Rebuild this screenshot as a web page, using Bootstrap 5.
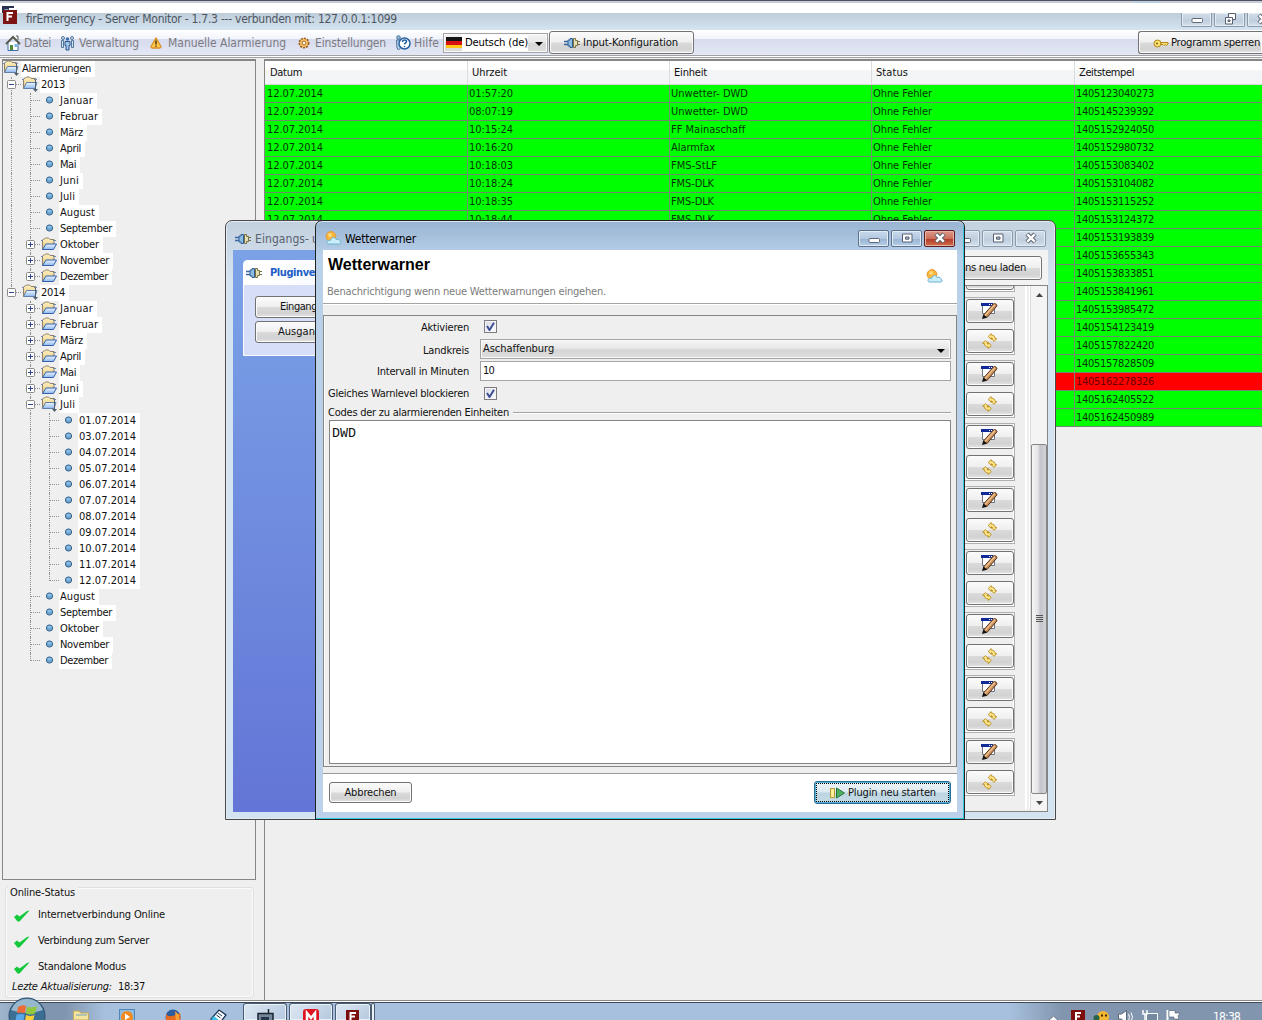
<!DOCTYPE html>
<html lang="de">
<head>
<meta charset="utf-8">
<title>firEmergency - Server Monitor</title>
<link rel="stylesheet" href="https://cdn.jsdelivr.net/npm/bootstrap@5.3.0/dist/css/bootstrap.min.css">
<script src="https://cdn.jsdelivr.net/npm/bootstrap@5.3.0/dist/js/bootstrap.bundle.min.js"></script>
<style>
html,body{height:1020px;overflow:hidden}
body{width:1262px;position:relative;background:#efefef;color:#111;font:11px/16px "DejaVu Sans Condensed","DejaVu Sans",sans-serif}
svg{display:block;flex:none}
[data-w],.fx{white-space:pre;flex:none}
.screen{height:1020px}
.topstrip{height:13px;background:#fff;border-top:1px solid #4c5262;box-shadow:inset 0 2px #c6ccd6}
.titlebar{height:17px;background:linear-gradient(#bfcdda,#d5e4f1);color:#4d5660;font-size:12px;padding-left:3px}
.appmenu{height:25px;background:linear-gradient(#fff 0,#f2f4fb 35%,#d6dbee 36%,#e4e8f6 100%);color:#7c7c80;font-size:12px;padding-left:2px}
.rule{height:3px;flex:none;border-top:1px solid #a2a2a2;background:linear-gradient(#fff 0 1px,#a2a2a2 1px 2px)}
.jb{border:1px solid #727272;border-radius:3px;background:linear-gradient(#fbfbfb 0,#efefef 48%,#dadada 52%,#d2d2d2 80%,#e4e4e4 100%);color:#111;box-shadow:inset 0 0 0 1px #fbfbfb}
.wb{width:31px;height:17px;border:1px solid #8b98aa;border-radius:2px;background:linear-gradient(#d2dde9,#c3d0df 50%,#bccbdb 51%,#d3e0ec);box-shadow:inset 0 0 0 1px #e3ebf3}
.wb.cut{height:14px;border-top:0;flex:none;border-radius:0 0 2px 2px}
.wb.act{border-color:#5c718d;background:linear-gradient(#c9d9ec,#b3c8e0 50%,#98b3d2 51%,#b5cfe9)}
.wb.shut{border-color:#5b1d1c;background:linear-gradient(#dc9a88,#cb6e5c 50%,#b43a26 51%,#cf6c4c);box-shadow:inset 0 0 0 1px #e7b3a6}
.treebox{width:254px;height:821px;margin-left:2px;border:1px solid #868686;border-top-width:2px;background:#efefef}
.trow{height:16px}
.cell{width:19px;height:16px;position:relative;flex:none}
.cell.v::before{content:"";position:absolute;left:8px;top:0;bottom:0;border-left:1px dotted #909090}
.cell.half::before{bottom:8px}
.cell.h::after{content:"";position:absolute;left:9px;right:1px;top:7px;border-top:1px dotted #909090}
.cell svg{position:absolute;left:4px;top:3px;z-index:1}
.tlabel{background:#fff;height:16px;padding:0 4px 0 1px;line-height:15px}
.ticon{width:18px;height:16px;flex:none;margin-top:-1px}
.statusbox{margin:7px 3px 0 5px;height:111px;width:249px;border:1px solid #dce1e6;border-radius:3px;box-shadow:inset 0 0 0 1px #fafafa}
.statusbox .cap{background:#efefef;margin:-3px 0 0 2px;padding:0 2px;line-height:16px;width:70px}
.onl{padding:6px 0 0 8px;height:26px}
.onl svg{margin-top:3px}
.leftcol{width:257px}
.gridbox{margin-left:7px;border:1px solid #868686;border-right:0;border-top-width:2px;height:942px}
.ghead{height:24px;background:linear-gradient(#fff 0,#fff 38%,#f4f5f6 42%,#f3f4f5);border-bottom:1px solid #d8d8d8}
.ghead>div{border-right:1px solid #dcdcdc;padding:4px 0 0 5px;height:100%}
.ghead>div+div{padding-left:4px}
.grow{height:18px;background:#0f0;color:#063306;border-bottom:1px solid #708870}
.grow.bad{background:#f00;color:#600}
.grow>div{border-right:1px solid #709070;padding-left:1px;line-height:17px}
.grow>div:first-child{padding-left:2px}
.c1{width:203px}.c2{width:202px}.c5{width:190px}
.taskbar{position:absolute;left:0;right:0;top:1000px;height:20px;border-top:1px solid #8a8a8a;background:#a7c0dd}
.taskbar .shade{position:absolute;inset:0;border-top:1px solid #fff;background:linear-gradient(#3d4858 0 1px,transparent 1px),linear-gradient(90deg,#9fb4cd 0,#8095af 40px,#8095af 65px,#a7c0dd 105px,#a7c0dd 1010px,#8195ae 1062px,#8195ae)}
.tb{height:17px;border:1px solid #4b5c72;border-bottom:0;border-radius:3px 3px 0 0;background:linear-gradient(135deg,#dde7f2,#b5c9e0);box-shadow:inset 0 0 0 1px #e9f1f8}
.pin{position:absolute}
.win{position:absolute;top:220px;height:600px;border:1px solid #222;border-radius:7px 7px 0 0}
.win .wt{height:29px;font-size:12px}
#back{left:225px;width:831px;background:linear-gradient(#c3d0de,#d6e4f1 60px,#d4e3f1);border-color:#4a4a4a;padding:0 7px 7px;box-shadow:inset 0 0 0 1px #e3ecf4}
#front{left:315px;width:650px;background:linear-gradient(#98b4d2,#b9d0e9 35px,#bcd2ea);padding:0 7px 7px;box-shadow:inset 0 1px #dbe7f3,inset -1px -1px #35c8dc}
.bluepane{width:600px;background:linear-gradient(#7ba2e7,#6375d6);padding:10px}
.plug{border:1px solid #fff;background:#d6dff7;height:96px;width:400px;border-radius:4px 4px 0 0}
.plug .ph{height:24px;background:linear-gradient(90deg,#fff,#fff 20px,#d5defa);color:#215dc6;font-weight:bold;border-radius:4px 4px 0 0}
.backtool{height:35px;background:#f3f3f3}
.grp{width:61px;height:58px;margin-bottom:5px;border:1px solid #b0b0b0;box-shadow:inset -1px -1px #fff;padding:1px 0 0 11px}
.grp .jb{width:48px;height:24px}
.grp .jb+.jb{margin-top:6px}
.listpane{height:527px;border:1px solid #858585;border-left:0;background:#efefef;overflow:hidden}
.scrollcol{width:17px;background:#f4f4f4;border-left:1px solid #ddd}
.thumb{width:16px;height:350px;border:1px solid #858585;border-radius:2px;background:linear-gradient(90deg,#f6f6f6,#e5e5e7 40%,#c5c6cb 60%,#d2d3d7)}
.fhead{height:53px;background:#fff}
.fhead h1{font:bold 16px/19px "Liberation Sans",Arial,sans-serif;margin:0;padding:5px 0 0 5px;color:#000}
.formpane{margin-top:11px;height:452px;border:1px solid #858585;border-left-color:#888;padding-left:5px;box-shadow:inset 1px 0 #fff}
.flabel{width:140px;text-align:right;flex:none;display:flex;justify-content:flex-end;padding-top:2px}
.chk{width:13px;height:13px;border:1px solid #7c7c82;background:linear-gradient(135deg,#d5d9e4,#fff);box-shadow:inset 0 0 0 1px #f5f5f5}
.fld{width:471px;height:20px;border:1px solid #a4a4a4;background:#fff;padding-left:2px}
.sel{background:linear-gradient(#f4f4f4 0,#e8e8e8 45%,#d6d6d6 55%,#dedede);box-shadow:inset 0 0 0 1px #fafafa}
.area{width:622px;height:344px;border:1px solid #848484;background:#fff;padding:6px 2px;font:13.3px/14px "Liberation Mono",monospace}
.ffoot{margin-top:6px;border-top:1px solid #9a9a9a;height:39px;background:#fff;padding:0 6px 1px}
.primary{border-color:#2b6f94;background:linear-gradient(#eef5f8,#dbe9f0 48%,#bcd5e2 52%,#c6dce7);box-shadow:inset 0 0 0 1px #55aed6}
.primary span.dots{border:1px dotted #000;margin:1px}
</style>
</head>
<body>
<svg width="0" height="0" class="pin">
<defs>
<linearGradient id="gy" x2="0" y2="1"><stop stop-color="#fff3c0"/><stop offset="1" stop-color="#e6c277"/></linearGradient>
<linearGradient id="gb" x2="0" y2="1"><stop stop-color="#eef6ff"/><stop offset="1" stop-color="#8db8ee"/></linearGradient>
<symbol id="folder" viewBox="0 0 17 16"><path d="M1.500 13.500V4.500l1-1.500h1l1-1h3l1.500 1.500h4v5" fill="url(#gy)" stroke="#8b7f6a"/><path d="M1.500 13.500l3.500-5.500h10.500l-3 5.500z" fill="url(#gb)" stroke="#3560b0"/><path d="M0 4.500h2M12 4.500h3" stroke="#7689a8"/></symbol>
<symbol id="fopen" viewBox="0 0 17 16"><path d="M1.500 12.500V3.500l1-1.500h1l1-1h3l1.500 1.500h4.500v5" fill="url(#gy)" stroke="#8b7f6a"/><path d="M1.500 12.500l3-6h10.500l-2 6z" fill="url(#gb)" stroke="#6380a8"/><path d="M0 3.500h2M12 3.500h3" stroke="#7689a8"/><path d="M13.500 4v10" stroke="#50606e"/><path d="M11 13h5l-2.500 3z" fill="#50606e"/></symbol>
<symbol id="dot" viewBox="0 0 16 16"><circle cx="8.500" cy="8" r="3.100" fill="#6fa8d6" stroke="#33618b"/><path d="M6.500 7h4" stroke="#aed4ef"/></symbol>
<symbol id="plug" viewBox="0 0 17 12"><path d="M0 4.500h5M0 7.500h5" stroke="#3c6aa0" stroke-width="1.500"/><path d="M4 3h2V1.500h2.500v9H6V9H4z" fill="#8cbbe2" stroke="#315f96"/><path d="M9.500 1.500h2v2h2v5h-2v2h-2z" fill="#e5dfb4" stroke="#777044"/><path d="M13 4.500h3M13 7.500h3" stroke="#777044" stroke-width="1.200"/></symbol>
<symbol id="sun" viewBox="0 0 17 14"><circle cx="6" cy="5.500" r="4.900" fill="#f9b53c" stroke="#e69834"/><circle cx="5" cy="4" r="2" fill="#ffd978"/><path d="M3 13c-2.500-1.500 0-4.500 2.500-3.500C6 6 10.500 5.500 11 8.500c2.500-1 4.500.5 4 2 1.800.5 1.500 2.500-.5 2.500z" fill="#c9edf9" stroke="#6fb4d2"/></symbol>
<symbol id="pen" viewBox="0 0 18 16"><path d="M1.500 1.500h12v9h-12z" fill="#fff" stroke="#6b7480"/><path d="M0 0h12v3H0z" fill="#102b99"/><path d="M8 1.500h4" stroke="#fff" stroke-dasharray="1 1"/><path d="M2.500 12L12.500.8q3-.8 3.500 2L6 14.500z" fill="#c88d56" stroke="#5a351d"/><path d="M4 12.500L14 1.500" stroke="#efc494" stroke-width="1.200"/><path d="M1 16l1.300-4.500L6 14.700z" fill="#111"/></symbol>
<symbol id="swap" viewBox="0 0 16 16"><path d="M6.200 3.500L9.200.6V2c2.600 0 4 1.600 4 3.700h1.600l-2.800 2.600L9.300 5.700h1.200q-.2-.9-1.300-.9v1.600z" fill="#ffe68a" stroke="#b98a1c" stroke-width=".9"/><path d="M9.300 12.500l-3 2.900V14c-2.600 0-4-1.600-4-3.700H.7l2.800-2.600 2.700 2.600H5q.2.900 1.300.9V9.600z" fill="#ffe68a" stroke="#b98a1c" stroke-width=".9"/></symbol>
<symbol id="tick" viewBox="0 0 16 12"><path d="M0 7l3-2.500 2.500 2L13 1l2.500-.5L5.500 11.500H3.500z" fill="#12c83b"/></symbol>
<symbol id="cmark" viewBox="0 0 9 9"><path d="M1 4l2.500 4L8 .8" fill="none" stroke="#3e4e96" stroke-width="2"/></symbol>
<symbol id="wmin" viewBox="0 0 14 12"><rect x="2" y="6.500" width="10.500" height="4" rx="1" fill="#fff" stroke="#5d6776"/></symbol>
<symbol id="wmax" viewBox="0 0 14 12"><path d="M2.500 2h9.500v8H2.500z" fill="#fff" stroke="#566070"/><path d="M5.500 5h3.500v2.200H5.500z" fill="#aebccd" stroke="#566070"/></symbol>
<symbol id="wres" viewBox="0 0 14 12"><path d="M5.500.5h7v6h-7z" fill="#fff" stroke="#566070"/><path d="M2.500 4.500h7v6.500h-7z" fill="#fff" stroke="#566070"/><path d="M5 7h2v1.500H5z" fill="#bbb" stroke="#566070"/></symbol>
<symbol id="wx" viewBox="0 0 14 12"><path d="M3 2l8 8M11 2l-8 8" stroke="#555f6e" stroke-width="4.400"/><path d="M3.300 2.300l7.400 7.400M10.700 2.300L3.300 9.700" stroke="#fff" stroke-width="2.400"/></symbol>
<symbol id="plus" viewBox="0 0 9 9"><rect x=".5" y=".5" width="8" height="8" rx="1" fill="#fff" stroke="#8a8a8a"/><path d="M2 4.500h5M4.500 2v5" stroke="#2c468c"/></symbol>
<symbol id="minus" viewBox="0 0 9 9"><rect x=".5" y=".5" width="8" height="8" rx="1" fill="#fff" stroke="#8a8a8a"/><path d="M2 4.500h5" stroke="#2c468c"/></symbol>
</defs>
</svg>

<div class="screen d-flex flex-column">
  <div class="topstrip d-flex justify-content-between"><svg width="16" height="12"><path d="M2 5h12v2h-5v5H2z" fill="#26324e"/><path d="M4.500 8h4v3h-4z" fill="#8ba0ce"/></svg><svg width="130" height="2"><path d="M1 0h27v2H1z" fill="#b9cde3"/></svg></div>
  <div class="titlebar d-flex">
    <svg width="14" height="14" style="margin-top:-3px"><rect width="14" height="14" fill="#7c1414"/><path d="M4.500 2v9M5 3h5M5 6.500h4" stroke="#fff" stroke-width="2"/></svg>
    <span class="fx" data-w="371" style="margin:-2px 0 0 9px">firEmergency - Server Monitor - 1.7.3 --- verbunden mit: 127.0.0.1:1099</span>
    <div class="d-flex ms-auto overflow-hidden" style="width:81px;gap:2px">
      <div class="wb cut d-flex justify-content-center"><svg width="14" height="12" style="margin-top:-1px"><use href="#wmin"/></svg></div>
      <div class="wb cut d-flex justify-content-center"><svg width="14" height="12"><use href="#wres"/></svg></div>
      <div class="wb cut ps-2"><svg width="14" height="12"><use href="#wx"/></svg></div>
    </div>
  </div>
  <div class="appmenu d-flex align-items-center">
    <svg width="18" height="18" viewBox="0 0 18 18" style="margin-left:2px"><path d="M4 8v8.500h10V8" fill="#fff" stroke="#3d6e9c"/><path d="M2 10l7-7 7 7" fill="none" stroke="#5a5c50" stroke-width="2"/><path d="M12 2h2v4" stroke="#5a5c50" fill="none"/><rect x="6" y="11" width="3" height="5" fill="#4f8b34"/><rect x="10.500" y="10" width="2.500" height="3" fill="#78b9e8"/></svg>
    <span data-w="27" style="margin-left:2px">Datei</span>
    <svg width="15" height="16" viewBox="0 0 15 16" style="margin-left:9px"><g fill="#cfe2f3" stroke="#51779b"><circle cx="3" cy="3" r="1.500"/><path d="M1.500 5.500h2v7h-2z"/><circle cx="12" cy="3" r="1.500"/><path d="M11.500 5.500h2v7h-2z"/></g><circle cx="7.500" cy="4" r="1.800" fill="#3b6fb4"/><path d="M5 6.500h5v4H9V15H6v-4.500H5z" fill="#a2c7ec" stroke="#2c538a"/></svg>
    <span data-w="60" style="margin-left:4px">Verwaltung</span>
    <svg width="12" height="12" viewBox="0 0 12 12" style="margin-left:11px"><path d="M6 1L11 9.500q0 1.500-1.500 1.500h-7Q1 11 1 9.500z" fill="#ffc84a" stroke="#d99026" stroke-width="1.300"/><path d="M6 3.500v4M6 8.500v1.300" stroke="#4a3208" stroke-width="1.500"/></svg>
    <span data-w="118" style="margin-left:6px">Manuelle Alarmierung</span>
    <svg width="12" height="12" viewBox="0 0 12 12" style="margin-left:12px"><circle cx="6" cy="6" r="4.600" fill="#f2b65c" stroke="#9a5c20" stroke-width="1.800" stroke-dasharray="2 1"/><circle cx="6" cy="6" r="3.800" fill="#f4bd68"/><circle cx="6" cy="6" r="1.800" fill="#fff" stroke="#b5752c"/></svg>
    <span data-w="71" style="margin-left:5px">Einstellungen</span>
    <svg width="16" height="16" viewBox="0 0 16 16" style="margin-left:9px"><circle cx="3.500" cy="2.500" r="1.800" fill="#8db6dd" stroke="#4a7197"/><path d="M1.500 5h4v8l-2 2-1.500-2z" fill="#bad4ec" stroke="#4a7197"/><circle cx="9.500" cy="8.500" r="5.500" fill="#fff" stroke="#24619d" stroke-width="1.500"/><path d="M7.500 7q0-2 2-2t2 1.500q0 1-1 1.500t-1 1.500M9.500 11v1.300" fill="none" stroke="#24619d" stroke-width="1.500"/></svg>
    <span data-w="25" style="margin-left:3px">Hilfe</span>
    <div class="d-flex align-items-center sel fld text-black" style="width:105px;margin-left:4px">
      <svg width="16" height="11"><rect width="16" height="11" fill="#ffc717"/><rect width="16" height="8" fill="#d81010"/><rect width="16" height="4" fill="#151515"/></svg>
      <span class="bg-white" data-w="63" style="padding-left:3px;font-size:11.200px">Deutsch (de)</span>
      <svg width="8" height="4" style="margin:3px 0 0 7px"><path d="M0 0h8L4 4z"/></svg>
    </div>
    <div class="jb d-flex align-items-center" style="width:145px;height:23px;margin-left:1px;padding-left:14px;font-size:11.200px">
      <svg width="17" height="12"><use href="#plug"/></svg><span data-w="95" style="margin-left:2px">Input-Konfiguration</span>
    </div>
    <div class="jb d-flex align-items-center ms-auto" style="width:124px;height:23px;padding-left:14px;border-right:0;border-radius:3px 0 0 3px;font-size:11.200px">
      <svg width="16" height="12" viewBox="0 0 16 12"><circle cx="4.500" cy="6.500" r="3.500" fill="#ffe270" stroke="#b2861c"/><circle cx="4" cy="6.500" r="1" fill="#7a5a10"/><path d="M8 5.500h7v1.500l-1.500 1.500-1-1-1.500 1-1-1H8z" fill="#ffe270" stroke="#b2861c"/></svg>
      <span data-w="89" style="margin-left:2px">Programm sperren</span>
    </div>
  </div>
  <div class="rule"></div>
  <div class="d-flex" style="padding-top:1px">
    <div class="leftcol flex-shrink-0">
      <div class="treebox"><div class="d-flex flex-column" id="tree"></div></div>
      <div class="statusbox">
        <div class="cap"><span data-w="65">Online-Status</span></div>
        <div class="d-flex onl"><svg width="16" height="12"><use href="#tick"/></svg><span data-w="127" style="margin-left:8px">Internetverbindung Online</span></div>
        <div class="d-flex onl"><svg width="16" height="12"><use href="#tick"/></svg><span data-w="111" style="margin-left:8px">Verbindung zum Server</span></div>
        <div class="d-flex onl"><svg width="16" height="12"><use href="#tick"/></svg><span data-w="88" style="margin-left:8px">Standalone Modus</span></div>
        <div class="d-flex" style="padding-left:6px"><i data-w="100">Lezte Aktualisierung:</i><span data-w="27" style="margin-left:6px">18:37</span></div>
      </div>
    </div>
    <div class="gridbox flex-fill" id="grid">
      <div class="ghead d-flex">
        <div class="c1"><span data-w="32">Datum</span></div><div class="c2"><span data-w="35">Uhrzeit</span></div><div class="c2"><span data-w="33">Einheit</span></div><div class="c1"><span data-w="32">Status</span></div><div class="c5"><span data-w="55">Zeitstempel</span></div>
      </div>
    </div>
  </div>
</div>

<div class="taskbar"><div class="shade"></div>
  <svg class="pin" style="left:8px;top:-4px" width="38" height="24" viewBox="0 0 38 24"><circle cx="19" cy="19" r="18" fill="#3d6f95" stroke="#2a4d6c"/><path d="M3 13a17 17 0 0 1 32 0q-16 6-32 0z" fill="#b5cfdf" opacity=".75"/><path d="M10 10q4-3 8-1l-1 7q-5-1-8 0z" fill="#ec6a35"/><path d="M19 9.500q5 2 10-.5l-2 7.500q-5 2-9 0z" fill="#93c83e"/><path d="M8.500 17.500q4-1 8 0l-1 6h-8z" fill="#59a8e8"/><path d="M18 18q4 2 8.500 0L25 24h-8z" fill="#fbcf35"/></svg>
  <svg class="pin" style="left:73px;top:9px" width="16" height="10"><path d="M.5 1h6l1 2h8v7h-15z" fill="#f3e4a0" stroke="#c4a95a"/><path d="M3 5h11" stroke="#6fa3c8"/></svg>
  <svg class="pin" style="left:119px;top:8px" width="16" height="11"><rect width="15" height="14" x=".5" y=".5" fill="#8dbbe2" stroke="#4d86b8"/><circle cx="8" cy="8" r="6" fill="#f38b20"/><path d="M6 4.500l5 3.500-5 3z" fill="#fff"/></svg>
  <svg class="pin" style="left:165px;top:8px" width="16" height="11"><circle cx="8" cy="8" r="7.500" fill="#2d5d9f"/><path d="M1 4q1 4 6 3t8-3q1 4 0 9H1z" fill="#e66b1f"/><path d="M10 2l4 4v6h-3z" fill="#f5a13a"/></svg>
  <svg class="pin" style="left:210px;top:8px" width="17" height="12"><path d="M1 10l8-9 7 5-7 9z" fill="#fff" stroke="#17324f" stroke-width="1.300"/><path d="M1 10l3-3 7 6-2 2z" fill="#3dc0e8"/><path d="M8 4l4 3M6.500 6l4 3" stroke="#17324f"/></svg>
  <div class="tb pin" style="left:243px;top:2px;width:44px"></div><div class="tb pin" style="left:289px;top:2px;width:44px"></div><div class="tb pin" style="left:335px;top:2px;width:36px"></div><div class="tb pin" style="left:371px;top:2px;width:4px"></div>
  <svg class="pin" style="left:257px;top:8px" width="17" height="11"><path d="M11.500 0v5M1 4.500h15V13H1z" fill="#72869c" stroke="#1c252f" stroke-width="1.500"/><path d="M4 8h8v4H4z" fill="#253548"/></svg>
  <svg class="pin" style="left:303px;top:8px" width="16" height="11"><rect width="16" height="15" rx="3" fill="#e01420"/><path d="M4 12V4l4 5 4-5v8" fill="none" stroke="#fff" stroke-width="2.500"/></svg>
  <svg class="pin" style="left:346px;top:9px" width="13" height="10"><rect width="13" height="13" fill="#7c0e0e"/><path d="M4.500 2v9M5 3h5M5 6.500h4" stroke="#fff" stroke-width="2"/></svg>
  <svg class="pin" style="left:1048px;top:14px" width="11" height="5"><path d="M0 6l5.500-5L11 6z" fill="#fff" stroke="#5f6c7c"/></svg>
  <svg class="pin" style="left:1071px;top:9px" width="14" height="10"><rect width="14" height="13" fill="#7c0e0e"/><path d="M5 2v9M5 3h5M5 6.500h4" stroke="#fff" stroke-width="2"/></svg>
  <svg class="pin" style="left:1093px;top:10px" width="17" height="9"><circle cx="10" cy="6" r="6" fill="#f4b72f"/><circle cx="3.500" cy="7" r="3" fill="#2a6448"/><path d="M8 4.500h2M12 4.500h2" stroke="#402a08" stroke-width="2"/></svg>
  <svg class="pin" style="left:1118px;top:9px" width="17" height="10"><path d="M.5 4h3l5-3.500V14L3.500 9h-3z" fill="#fff" stroke="#5b6877"/><path d="M10.500 4q2 3 0 7M13 2.500q3 5 0 9" fill="none" stroke="#fff"/></svg>
  <svg class="pin" style="left:1142px;top:9px" width="16" height="10"><path d="M4.500 3.500h11V11h-11z" fill="#74899f" stroke="#fff"/><path d="M1 0v4h4V0M3 4v7" fill="none" stroke="#fff" stroke-width="1.500"/></svg>
  <svg class="pin" style="left:1166px;top:8px" width="16" height="11"><path d="M1.500 1v11" stroke="#fff" stroke-width="2"/><path d="M3 1.500h6v2.500h5l-2 3 1 3H8V8H3z" fill="#fff" stroke="#4f5d6e" stroke-width=".6"/></svg>
  <span class="pin text-white" data-w="27" style="left:1213px;top:9px;font-size:12px;line-height:14px">18:38</span>
</div>

<div class="win d-flex flex-column" id="back">
  <div class="wt d-flex" style="color:#58616c">
    <svg width="17" height="12" style="margin:12px 0 0 2px"><use href="#plug"/></svg>
    <span data-w="54" style="margin:10px 0 0 3px">Eingangs-</span><span style="margin:10px 0 0 3px">u</span>
    <div class="d-flex ms-auto" style="margin:9px 2px 0 0;gap:2px">
      <div class="wb d-flex justify-content-center"><svg width="14" height="12" style="margin-top:1px"><use href="#wmin"/></svg></div><div class="wb d-flex justify-content-center"><svg width="14" height="12" style="margin-top:1px"><use href="#wmax"/></svg></div><div class="wb d-flex justify-content-center"><svg width="14" height="12" style="margin-top:1px"><use href="#wx"/></svg></div>
    </div>
  </div>
  <div class="d-flex flex-fill">
    <div class="bluepane">
      <div class="plug">
        <div class="ph d-flex align-items-center"><svg width="17" height="12" style="margin-left:2px"><use href="#plug"/></svg><span data-w="45" style="margin-left:7px">Pluginve</span></div>
        <div class="jb" style="width:130px;height:22px;margin:11px 0 0 11px;padding:2px 0 0 24px"><span data-w="37">Eingang</span></div>
        <div class="jb" style="width:130px;height:22px;margin:3px 0 0 11px;padding:2px 0 0 22px"><span data-w="37">Ausgan</span></div>
      </div>
    </div>
    <div class="flex-fill" style="background:#efefef">
      <div class="backtool d-flex justify-content-end" style="padding:6px 6px 0 0"><div class="jb d-flex align-items-center justify-content-end" style="width:150px;height:24px;padding-right:15px;font-size:11.200px"><span data-w="61">ns neu laden</span></div></div>
      <div class="listpane d-flex justify-content-end">
        <div id="groups" style="margin:-52px 10px 0 0"></div>
        <div style="width:5px;border-left:2px solid #fff;border-right:1px solid #fff;height:523px"></div>
        <div class="scrollcol d-flex flex-column align-items-center">
          <svg width="7" height="4" style="margin-top:7px"><path d="M0 4h7L3.500 0z" fill="#444"/></svg>
          <div class="thumb d-flex align-items-center justify-content-center" style="margin-top:147px"><svg width="7" height="9"><path d="M0 .5h7M0 2.500h7M0 4.500h7M0 6.500h7" stroke="#555"/></svg></div>
          <svg width="7" height="4" style="margin-top:7px"><path d="M0 0h7L3.500 4z" fill="#444"/></svg>
        </div>
      </div>
    </div>
  </div>
</div>

<div class="win" id="front">
  <div class="wt d-flex text-black">
    <svg width="17" height="14" style="margin:10px 0 0 2px"><use href="#sun"/></svg>
    <span data-w="71" style="margin:10px 0 0 3px">Wetterwarner</span>
    <div class="d-flex ms-auto" style="margin:9px 2px 0 0;gap:2px">
      <div class="wb act d-flex justify-content-center"><svg width="14" height="12" style="margin-top:1px"><use href="#wmin"/></svg></div><div class="wb act d-flex justify-content-center"><svg width="14" height="12" style="margin-top:1px"><use href="#wmax"/></svg></div><div class="wb shut d-flex justify-content-center"><svg width="14" height="12" style="margin-top:1px"><use href="#wx"/></svg></div>
    </div>
  </div>
  <div style="background:#efefef;height:562px">
    <div class="fhead d-flex justify-content-between">
      <div><h1><span data-w="102">Wetterwarner</span></h1><div style="color:#7b7b7b;padding:10px 0 0 4px"><span data-w="279">Benachrichtigung wenn neue Wetterwarnungen eingehen.</span></div></div>
      <svg width="17" height="14" style="margin:19px 14px 0 0"><use href="#sun"/></svg>
    </div>
    <div style="height:2px;border-top:1px solid #a4a4a4;background:#fff;margin-bottom:-1px"></div>
    <div class="formpane">
      <div class="d-flex align-items-center" style="height:22px"><div class="flabel"><span data-w="48">Aktivieren</span></div><div class="chk" style="margin-left:15px;margin-top:-1px"><svg width="9" height="9" style="margin:1px"><use href="#cmark"/></svg></div></div>
      <div class="d-flex align-items-center" style="height:22px;padding-top:2px"><div class="flabel"><span data-w="46">Landkreis</span></div><div class="fld sel d-flex align-items-center" style="margin-left:11px;margin-top:-2px"><span data-w="71">Aschaffenburg</span><svg width="8" height="4" class="ms-auto" style="margin:3px 5px 0 0"><path d="M0 0h8L4 4z"/></svg></div></div>
      <div class="d-flex align-items-center" style="height:22px"><div class="flabel"><span data-w="92">Intervall in Minuten</span></div><div class="fld d-flex align-items-center" style="margin-left:11px"><span data-w="11">10</span></div></div>
      <div class="d-flex align-items-center" style="height:22px"><div class="flabel"><span data-w="141">Gleiches Warnlevel blockieren</span></div><div class="chk" style="margin-left:15px"><svg width="9" height="9" style="margin:1px"><use href="#cmark"/></svg></div></div>
      <div class="d-flex align-items-center" style="height:16px;margin-left:-1px;padding-top:2px"><span data-w="181">Codes der zu alarmierenden Einheiten</span><div style="width:438px;margin-left:4px;border-top:1px solid #a2a2a2;border-bottom:1px solid #fff"></div></div>
      <div class="area">DWD</div>
    </div>
    <div class="ffoot d-flex align-items-center justify-content-between">
      <div class="jb d-flex align-items-center justify-content-center" style="width:83px;height:21px"><span data-w="52">Abbrechen</span></div>
      <div class="jb primary d-flex" style="width:137px;height:23px"><span class="dots d-flex align-items-center flex-fill" style="padding-left:13px"><svg width="16" height="12" viewBox="0 0 16 12"><path d="M.5 1.500h4v9h-4z" fill="#ffef9a" stroke="#b8982c"/><path d="M6.500 1v10L14.500 6z" fill="#4fae62" stroke="#25763b"/></svg><span data-w="88" style="margin-left:2px">Plugin neu starten</span></span></div>
    </div>
  </div>
</div>

<script>
const svg=(id,w,h)=>`<svg width="${w}" height="${h}"><use href="#${id}"/></svg>`;
const W={Januar:33,Februar:38,'März':23,April:21,Mai:16,Juni:19,Juli:15,August:35,September:52,Oktober:39,November:49,Dezember:48};
const M=Object.keys(W);
// One tree line: guide cells, the icon, then the caption
const line=(cells,icon,text,w)=>`<div class="trow d-flex">${cells.join('')}<div class="ticon">${svg(icon,icon==='dot'?16:17,16)}</div><span class="tlabel" data-w="${w}">${text}</span></div>`;
const cell=(c,e)=>`<div class="cell ${c}">${e?svg(e,9,9):''}</div>`;
let t=line([],'fopen','Alarmierungen',69);
t+=line([cell('v h','minus')],'fopen','2013',24);
M.forEach((m,i)=>t+=line([cell('v'),cell(i==11?'v half h':'v h',i>8?'plus':'')],i>8?'folder':'dot',m,W[m]));
t+=line([cell('v half h','minus')],'fopen','2014',24);
M.forEach((m,i)=>{
  t+=line([cell(''),cell(i==11?'v half h':'v h',i<6?'plus':i==6?'minus':'')],i<6?'folder':i==6?'fopen':'dot',m,W[m]);
  if(i==6)['01','03','04','05','06','07','08','09','10','11','12'].forEach(d=>t+=line([cell(''),cell('v'),cell(d=='12'?'v half h':'v h')],'dot',d+'.07.2014',57));
});
document.getElementById('tree').innerHTML=t;
const rows=[['01:57:20','Unwetter- DWD',1405123040273,77],['08:07:19','Unwetter- DWD',1405145239392,77],['10:15:24','FF Mainaschaff',1405152924050,74],['10:16:20','Alarmfax',1405152980732,44],['10:18:03','FMS-StLF',1405153083402,46],['10:18:24','FMS-DLK',1405153104082,43],['10:18:35','FMS-DLK',1405153115252,43],['10:18:44','FMS-DLK',1405153124372,43],...[1405153193839,1405153655343,1405153833851,1405153841961,1405153985472,1405154123419,1405157822420,1405157828509,1405162278326,1405162405522,1405162450989].map(n=>['','',n,0])];
// Rows fully behind the dialogs carry only their visible timestamp
document.getElementById('grid').insertAdjacentHTML('beforeend',rows.map((r,i)=>`<div class="grow d-flex ${i==16?'bad':''}"><div class="c1"><span data-w="56">${r[0]?'12.07.2014':''}</span></div><div class="c2"><span data-w="44">${r[0]}</span></div><div class="c2"><span data-w="${r[3]}">${r[1]}</span></div><div class="c1"><span data-w="59">${r[0]?'Ohne Fehler':''}</span></div><div class="c5"><span data-w="78">${r[2]}</span></div></div>`).join(''));
document.getElementById('groups').innerHTML=Array(9).fill(`<div class="grp"><div class="jb d-flex align-items-center justify-content-center">${svg('pen',18,16)}</div><div class="jb d-flex align-items-center justify-content-center">${svg('swap',16,16)}</div></div>`).join('');
document.querySelectorAll('[data-w]').forEach(e=>{
  if(!e.textContent)return;
  const r=document.createRange();r.selectNodeContents(e);
  e.style.letterSpacing=((e.dataset.w-r.getBoundingClientRect().width)/e.textContent.length).toFixed(3)+'px';
});
</script>
</body>
</html>
